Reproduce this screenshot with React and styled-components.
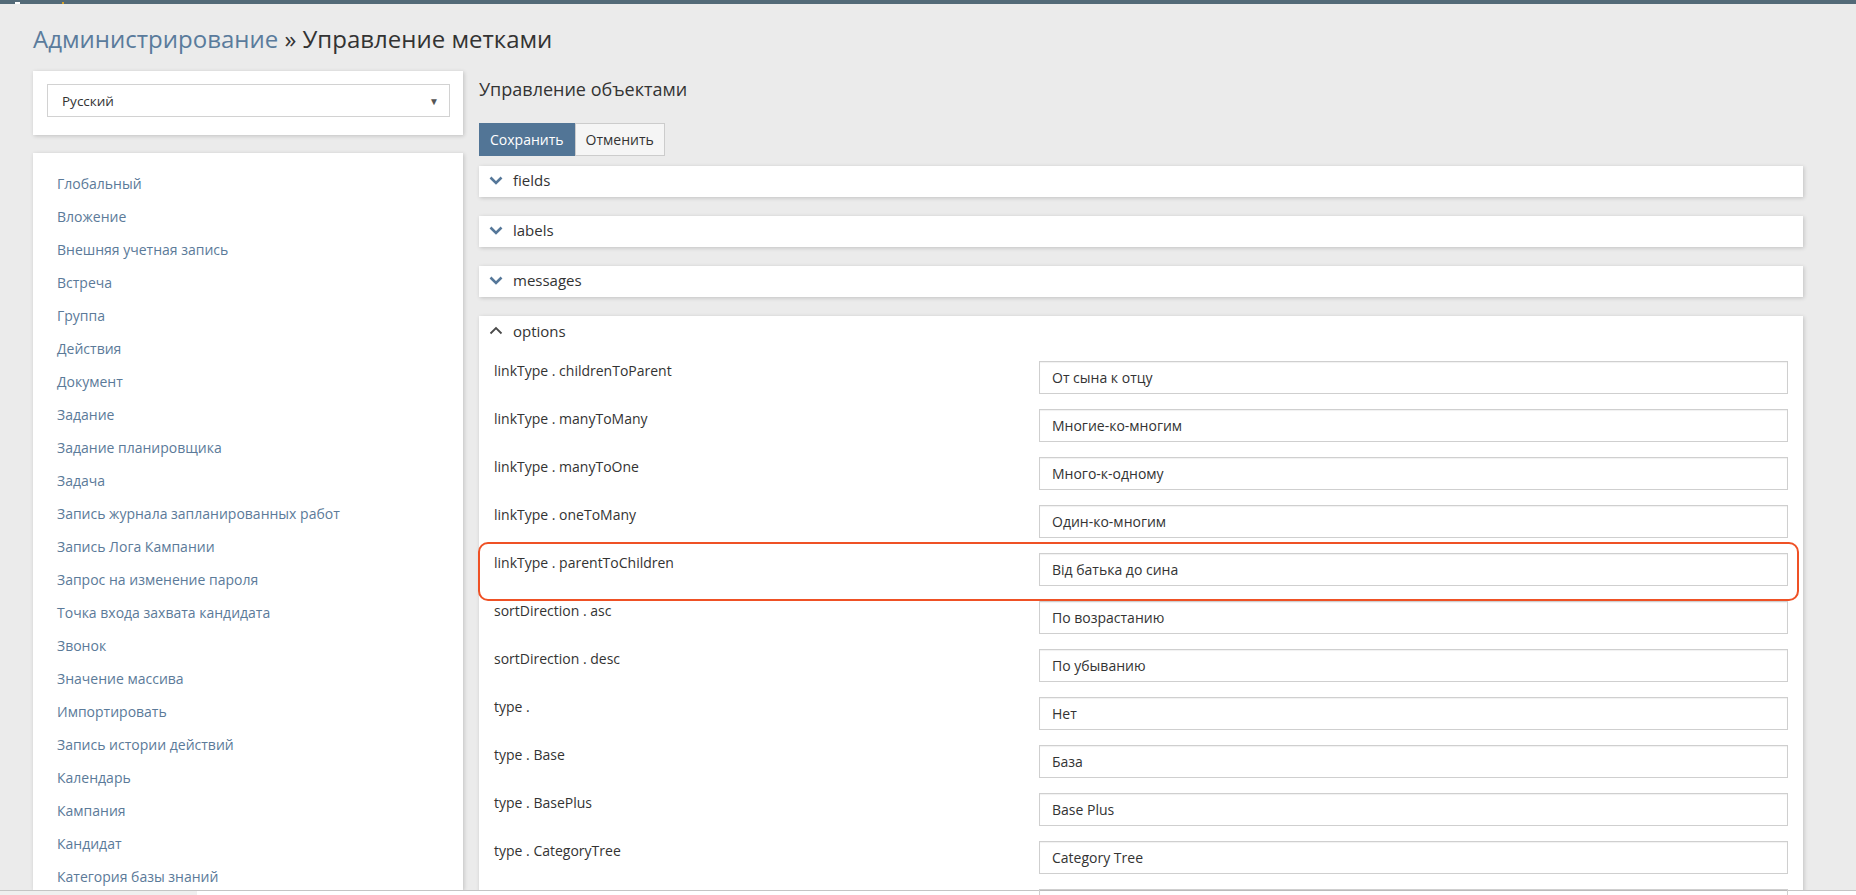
import React from "react";
import styled, { createGlobalStyle } from "styled-components";

const GlobalStyle = createGlobalStyle`
  html, body {
    margin: 0;
    padding: 0;
    background: #ebebeb;
    font-family: "Open Sans", "Liberation Sans", sans-serif;
    color: #333;
  }
`;

const Page = styled.div`
  height: 895px;
  display: flex;
  flex-direction: column;
  overflow: hidden;
  background: #ebebeb;
`;

const TopBar = styled.div`
  height: 4px;
  flex: none;
  background: #536a78;
  display: flex;
  align-items: flex-end;
`;

const TopMark = styled.span`
  width: ${(p) => p.w}px;
  height: 2px;
  margin-left: ${(p) => p.left}px;
  background: ${(p) => p.color};
`;

const Title = styled.h1`
  margin: 19px 0 0 33px;
  font-size: 24px;
  line-height: 32px;
  font-weight: 400;
  color: #333;
`;

const Crumb = styled.span`
  color: #5a7b9c;
`;

const Main = styled.div`
  flex: 1;
  min-height: 0;
  display: flex;
  gap: 16px;
  padding: 0 53px 0 33px;
  margin-top: 16px;
`;

const LeftColumn = styled.div`
  width: 430px;
  flex: none;
  display: flex;
  flex-direction: column;
  gap: 18px;
`;

const Panel = styled.div`
  background: #fff;
  box-shadow: 1px 1px 4px rgba(0, 0, 0, 0.18);
`;

const SelectPanel = styled(Panel)`
  padding: 13px 13px 18px 14px;
`;

const SelectBox = styled.div`
  height: 33px;
  box-sizing: border-box;
  border: 1px solid #d2d2d2;
  display: flex;
  align-items: center;
  justify-content: space-between;
  padding: 0 10px 0 14px;
  font-size: 13.5px;
  color: #333;
`;

const Caret = styled.span`
  font-size: 10px;
  color: #555;
`;

const ListPanel = styled(Panel)`
  flex: 1;
  padding: 14px 24px;
  overflow: hidden;
`;

const ListItem = styled.div`
  height: 33px;
  display: flex;
  align-items: center;
  font-size: 14px;
  color: #5b7a99;
  white-space: nowrap;
`;

const RightColumn = styled.div`
  flex: 1;
  min-width: 0;
  display: flex;
  flex-direction: column;
`;

const Heading = styled.h2`
  margin: 6px 0 0;
  font-size: 18px;
  line-height: 24px;
  font-weight: 400;
  color: #333;
`;

const ButtonRow = styled.div`
  display: flex;
  margin-top: 22px;
`;

const Button = styled.button`
  height: 33px;
  padding: 0 10px;
  font-family: inherit;
  font-size: 14px;
  border: 1px solid ${(p) => (p.primary ? "#527596" : "#ccc")};
  background: ${(p) => (p.primary ? "#527596" : "#f5f5f5")};
  color: ${(p) => (p.primary ? "#fff" : "#333")};
  border-radius: 0;
`;

const Accordion = styled.div`
  display: flex;
  flex-direction: column;
  gap: 19px;
  margin-top: 10px;
`;

const Section = styled(Panel)`
  flex: none;
`;

const SectionHeader = styled.div`
  height: ${(p) => (p.open ? 32 : 31)}px;
  box-sizing: border-box;
  padding: 0 0 3px 10px;
  display: flex;
  align-items: center;
  gap: 10px;
  font-size: 15px;
  color: #333;
`;

const SectionBody = styled.div`
  padding: 13px 15px 0;
  display: flex;
  flex-direction: column;
  gap: 15px;
`;

const Row = styled.div`
  position: relative;
  display: flex;
  align-items: flex-start;
  height: 33px;

  ${(p) =>
    p.marked &&
    `
    &::after {
      content: "";
      position: absolute;
      top: -11px;
      bottom: -15px;
      left: -16px;
      right: -11px;
      border: 2.5px solid #ef5125;
      border-radius: 10px;
      pointer-events: none;
    }
  `}
`;

const RowLabel = styled.div`
  width: 545px;
  flex: none;
  font-size: 14px;
  line-height: 20px;
  color: #333;
`;

const TextInput = styled.div`
  flex: 1;
  height: 33px;
  box-sizing: border-box;
  border: 1px solid #cfcfcf;
  box-shadow: inset 0 1px 1px rgba(0, 0, 0, 0.06);
  display: flex;
  align-items: center;
  padding: 0 12px;
  font-size: 14px;
  color: #333;
`;

const ScrollTrack = styled.div`
  height: 4px;
  flex: none;
  border-top: 1px solid #c4c4c4;
  background: #fff;
`;

const ScrollThumb = styled.div`
  width: 197px;
  height: 100%;
  background: #efefef;
`;

const Chevron = ({ up }) => (
  <svg width="14" height="9" viewBox="0 0 14 9">
    {up ? (
      <path d="M1.5 7.5 L7 2 L12.5 7.5" fill="none" stroke="#4a4a4a" strokeWidth="1.8" />
    ) : (
      <path d="M1.5 1.5 L7 7 L12.5 1.5" fill="none" stroke="#557799" strokeWidth="2.6" />
    )}
  </svg>
);

const entities = [
  "Глобальный",
  "Вложение",
  "Внешняя учетная запись",
  "Встреча",
  "Группа",
  "Действия",
  "Документ",
  "Задание",
  "Задание планировщика",
  "Задача",
  "Запись журнала запланированных работ",
  "Запись Лога Кампании",
  "Запрос на изменение пароля",
  "Точка входа захвата кандидата",
  "Звонок",
  "Значение массива",
  "Импортировать",
  "Запись истории действий",
  "Календарь",
  "Кампания",
  "Кандидат",
  "Категория базы знаний",
];

const options = [
  ["linkType . childrenToParent", "От сына к отцу"],
  ["linkType . manyToMany", "Многие-ко-многим"],
  ["linkType . manyToOne", "Много-к-одному"],
  ["linkType . oneToMany", "Один-ко-многим"],
  ["linkType . parentToChildren", "Від батька до сина", true],
  ["sortDirection . asc", "По возрастанию"],
  ["sortDirection . desc", "По убыванию"],
  ["type . ", "Нет"],
  ["type . Base", "База"],
  ["type . BasePlus", "Base Plus"],
  ["type . CategoryTree", "Category Tree"],
  ["", ""],
];

export default function App() {
  return (
    <Page>
      <GlobalStyle />
      <TopBar>
        <TopMark left={15} w={5} color="#fff" />
        <TopMark left={42} w={2} color="#d4a22a" />
      </TopBar>
      <Title>
        <Crumb>Администрирование</Crumb> » Управление метками
      </Title>
      <Main>
        <LeftColumn>
          <SelectPanel>
            <SelectBox>
              Русский
              <Caret>▼</Caret>
            </SelectBox>
          </SelectPanel>
          <ListPanel>
            {entities.map((name) => (
              <ListItem key={name}>{name}</ListItem>
            ))}
          </ListPanel>
        </LeftColumn>
        <RightColumn>
          <Heading>Управление объектами</Heading>
          <ButtonRow>
            <Button primary>Сохранить</Button>
            <Button>Отменить</Button>
          </ButtonRow>
          <Accordion>
            {["fields", "labels", "messages"].map((name) => (
              <Section key={name}>
                <SectionHeader>
                  <Chevron />
                  {name}
                </SectionHeader>
              </Section>
            ))}
            <Section>
              <SectionHeader open>
                <Chevron up />
                options
              </SectionHeader>
              <SectionBody>
                {options.map(([label, value, marked], i) => (
                  <Row key={i} marked={marked}>
                    <RowLabel>{label}</RowLabel>
                    <TextInput>{value}</TextInput>
                  </Row>
                ))}
              </SectionBody>
            </Section>
          </Accordion>
        </RightColumn>
      </Main>
      <ScrollTrack>
        <ScrollThumb />
      </ScrollTrack>
    </Page>
  );
}
